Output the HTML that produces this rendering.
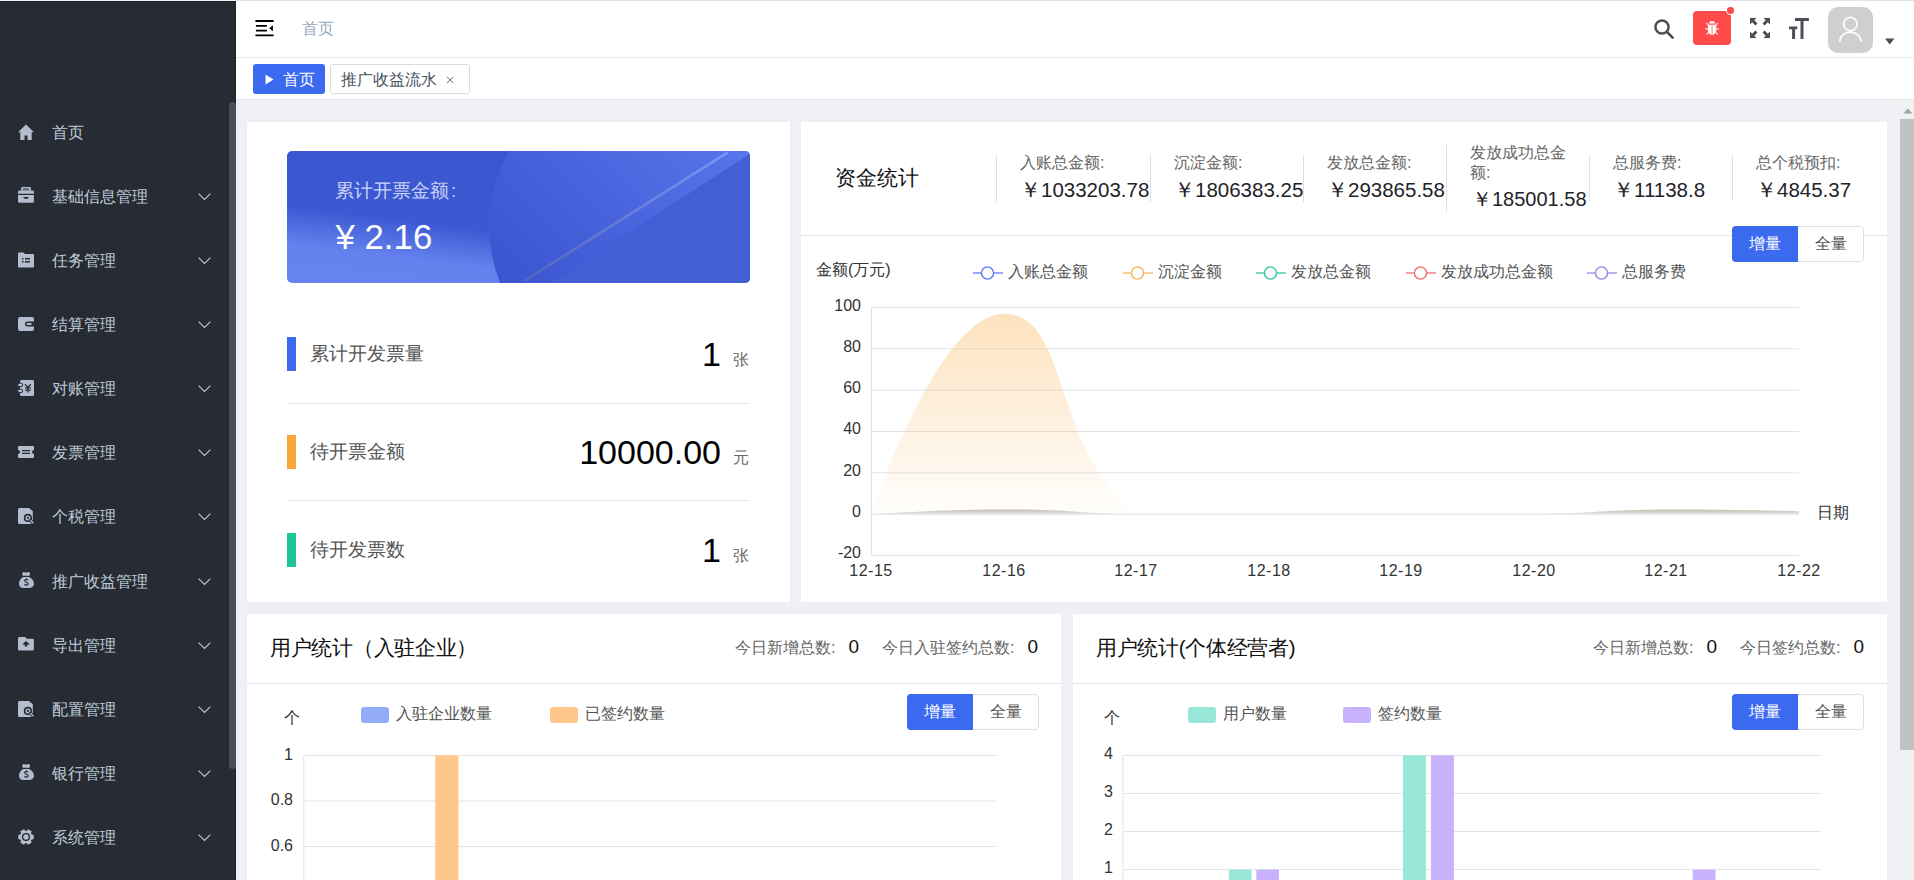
<!DOCTYPE html><html><head><meta charset="utf-8"><style>
*{margin:0;padding:0;box-sizing:border-box}
html,body{width:1914px;height:880px;overflow:hidden;background:#eef0f5;font-family:"Liberation Sans",sans-serif;}
.a{position:absolute;white-space:nowrap}
.mi{position:absolute;left:0;width:228px;height:40px;color:#bfcbd9;font-size:16px;line-height:40px}
.mi .t{position:absolute;left:52px;top:1px}
.mi svg.ic{position:absolute;left:18px;top:12px;width:16px;height:16px;overflow:visible}
.mi svg.ch{position:absolute;left:198px;top:17px;width:13px;height:8px}
.card{position:absolute;background:#fff}
.cn{font-family:"Liberation Sans",sans-serif}
</style></head><body>
<div class="a" style="left:0;top:0;width:236px;height:1px;background:#f4f4f5"></div>
<div class="a" style="left:0;top:1px;width:236px;height:879px;background:#272b33;border-top:1px solid #1d2028;border-right:1px solid #1f232a"></div>
<div class="a" style="left:229px;top:102px;width:7px;height:667px;background:#4a4e56;border-radius:4px"></div>
<div class="mi" style="top:112px"><svg class="ic" viewBox="0 0 16 16"><path d="M8 0.5L0 8.2h2.3V16h4.2v-4.6h3V16h4.2V8.2H16z" fill="#b4bdce"/></svg><span class="t">首页</span></div>
<div class="mi" style="top:176px"><svg class="ic" viewBox="0 0 16 16"><path d="M4.1 -1h7.8a1 1 0 0 1 1 1v2.5H3.1V0a1 1 0 0 1 1-1z" fill="#b4bdce"/><rect x="5" y="0.5" width="6" height="1.1" fill="#272b33"/><path d="M1.5 2.5h12.9a1.5 1.5 0 0 1 1.5 1.5v1.8H0V4a1.5 1.5 0 0 1 1.5-1.5z" fill="#b4bdce"/><path d="M0 6.9h15.9v6.4a1.5 1.5 0 0 1-1.5 1.5H1.5A1.5 1.5 0 0 1 0 13.3z" fill="#b4bdce"/><path d="M5.3 9.1h5.4c0 1.1-1.2 1.9-2.7 1.9s-2.7-0.8-2.7-1.9z" fill="#272b33"/></svg><span class="t">基础信息管理</span><svg class="ch" viewBox="0 0 13 8"><path d="M0.6 0.6L6.5 6.5L12.4 0.6" stroke="#bfcbd9" stroke-width="1.1" fill="none"/></svg></div>
<div class="mi" style="top:240px"><svg class="ic" viewBox="0 0 16 16"><path d="M0 1.5A1 1 0 0 1 1 0.5h4.5l1.5 1.5H15a1 1 0 0 1 1 1V14.5a1 1 0 0 1-1 1H1a1 1 0 0 1-1-1zM4 6v1.5h1.5V6zM7 6v1.5h5V6zM4 9v1.5h1.5V9zM7 9v1.5h5V9z" fill="#b4bdce" fill-rule="evenodd"/></svg><span class="t">任务管理</span><svg class="ch" viewBox="0 0 13 8"><path d="M0.6 0.6L6.5 6.5L12.4 0.6" stroke="#bfcbd9" stroke-width="1.1" fill="none"/></svg></div>
<div class="mi" style="top:304px"><svg class="ic" viewBox="0 0 16 16"><path d="M2 1h12a2 2 0 0 1 2 2v10a2 2 0 0 1-2 2H2a2 2 0 0 1-2-2V3a2 2 0 0 1 2-2zM9.5 5.5a2.5 2.5 0 0 0 0 5H16v-5zM9.5 7h4v2h-4a1 1 0 0 1 0-2z" fill="#b4bdce" fill-rule="evenodd"/></svg><span class="t">结算管理</span><svg class="ch" viewBox="0 0 13 8"><path d="M0.6 0.6L6.5 6.5L12.4 0.6" stroke="#bfcbd9" stroke-width="1.1" fill="none"/></svg></div>
<div class="mi" style="top:368px"><svg class="ic" viewBox="0 0 16 16"><path d="M3.5 0h11a1.5 1.5 0 0 1 1.5 1.5v13a1.5 1.5 0 0 1-1.5 1.5h-11a1.5 1.5 0 0 1-1.5-1.5v-13A1.5 1.5 0 0 1 3.5 0z" fill="#b4bdce"/><rect x="-0.3" y="3.2" width="5" height="3.4" rx="1.7" fill="#b4bdce" stroke="#272b33" stroke-width="1"/><rect x="-0.3" y="9.2" width="5" height="3.4" rx="1.7" fill="#b4bdce" stroke="#272b33" stroke-width="1"/><path d="M7 4.2L9.9 7.4L12.8 4.2M7 7.9h5.8M7 10.2h5.8M9.9 7.4v5" stroke="#272b33" stroke-width="1.3" fill="none"/></svg><span class="t">对账管理</span><svg class="ch" viewBox="0 0 13 8"><path d="M0.6 0.6L6.5 6.5L12.4 0.6" stroke="#bfcbd9" stroke-width="1.1" fill="none"/></svg></div>
<div class="mi" style="top:432px"><svg class="ic" viewBox="0 0 16 16"><path d="M1 2h14a1 1 0 0 1 1 1v3a2 2 0 0 0 0 4v3a1 1 0 0 1-1 1H1a1 1 0 0 1-1-1v-3a2 2 0 0 0 0-4V3a1 1 0 0 1 1-1zM4 6v1.2h8V6zM4 8.8V10h8V8.8z" fill="#b4bdce" fill-rule="evenodd"/></svg><span class="t">发票管理</span><svg class="ch" viewBox="0 0 13 8"><path d="M0.6 0.6L6.5 6.5L12.4 0.6" stroke="#bfcbd9" stroke-width="1.1" fill="none"/></svg></div>
<div class="mi" style="top:496px"><svg class="ic" viewBox="0 0 16 16"><path d="M1.5 0h9.5l3.8 3.2v11.3a1.5 1.5 0 0 1-1.5 1.5H1.5A1.5 1.5 0 0 1 0 14.5v-13A1.5 1.5 0 0 1 1.5 0z" fill="#b4bdce"/><circle cx="9.9" cy="9.9" r="3.3" fill="none" stroke="#272b33" stroke-width="1.6"/><circle cx="9.9" cy="9.9" r="1.1" fill="#272b33"/><path d="M12.4 12.4L15 14.8" stroke="#272b33" stroke-width="3.2" stroke-linecap="round"/><path d="M12.6 12.6L15 14.8" stroke="#b4bdce" stroke-width="1.4" stroke-linecap="round"/></svg><span class="t">个税管理</span><svg class="ch" viewBox="0 0 13 8"><path d="M0.6 0.6L6.5 6.5L12.4 0.6" stroke="#bfcbd9" stroke-width="1.1" fill="none"/></svg></div>
<div class="mi" style="top:561px"><svg class="ic" viewBox="0 0 16 16"><path d="M4.6 0c0.1-0.8 1-1.2 1.8-0.8l1.7 0.6l1.7-0.6c0.8-0.4 1.8 0 1.9 0.8l0.3 1.6c0.1 0.7-0.4 1.1-1.1 1.1H5.4c-0.7 0-1.2-0.4-1.1-1.1z" fill="#b4bdce"/><path d="M5.2 3.9h5.8c3 1.3 4.9 3.6 4.9 6.6c0 3-2.4 4.6-5.4 4.6H5.7c-3 0-4.7-1.6-4.7-4.6c0-3 1.6-5.3 4.2-6.6z" fill="#b4bdce"/><path d="M10.1 7.3c-0.4-0.6-1-0.9-1.7-0.9c-1 0-1.7 0.6-1.7 1.3c0 1.8 3.5 1.1 3.5 3c0 0.8-0.8 1.4-1.8 1.4c-0.8 0-1.5-0.4-1.9-1M8.4 5.4v1M8.4 11.8v1.2" stroke="#272b33" stroke-width="1.1" fill="none"/></svg><span class="t">推广收益管理</span><svg class="ch" viewBox="0 0 13 8"><path d="M0.6 0.6L6.5 6.5L12.4 0.6" stroke="#bfcbd9" stroke-width="1.1" fill="none"/></svg></div>
<div class="mi" style="top:625px"><svg class="ic" viewBox="0 0 16 16"><path d="M0 1.5A1.5 1.5 0 0 1 1.5 0h5.6l1.8 1.8h5.8a1.2 1.2 0 0 1 1.2 1.2v9.2a1.2 1.2 0 0 1-1.2 1.2H1.2A1.2 1.2 0 0 1 0 12.2z" fill="#b4bdce"/><path d="M4 7.4L8 4L12 7.4z M6.8 7h2.4v2.5H6.8z" fill="#272b33"/></svg><span class="t">导出管理</span><svg class="ch" viewBox="0 0 13 8"><path d="M0.6 0.6L6.5 6.5L12.4 0.6" stroke="#bfcbd9" stroke-width="1.1" fill="none"/></svg></div>
<div class="mi" style="top:689px"><svg class="ic" viewBox="0 0 16 16"><path d="M1.5 0h9.5l3.8 3.2v11.3a1.5 1.5 0 0 1-1.5 1.5H1.5A1.5 1.5 0 0 1 0 14.5v-13A1.5 1.5 0 0 1 1.5 0z" fill="#b4bdce"/><circle cx="9.9" cy="9.9" r="3.3" fill="none" stroke="#272b33" stroke-width="1.6"/><circle cx="9.9" cy="9.9" r="1.1" fill="#272b33"/><path d="M12.4 12.4L15 14.8" stroke="#272b33" stroke-width="3.2" stroke-linecap="round"/><path d="M12.6 12.6L15 14.8" stroke="#b4bdce" stroke-width="1.4" stroke-linecap="round"/></svg><span class="t">配置管理</span><svg class="ch" viewBox="0 0 13 8"><path d="M0.6 0.6L6.5 6.5L12.4 0.6" stroke="#bfcbd9" stroke-width="1.1" fill="none"/></svg></div>
<div class="mi" style="top:753px"><svg class="ic" viewBox="0 0 16 16"><path d="M4.6 0c0.1-0.8 1-1.2 1.8-0.8l1.7 0.6l1.7-0.6c0.8-0.4 1.8 0 1.9 0.8l0.3 1.6c0.1 0.7-0.4 1.1-1.1 1.1H5.4c-0.7 0-1.2-0.4-1.1-1.1z" fill="#b4bdce"/><path d="M5.2 3.9h5.8c3 1.3 4.9 3.6 4.9 6.6c0 3-2.4 4.6-5.4 4.6H5.7c-3 0-4.7-1.6-4.7-4.6c0-3 1.6-5.3 4.2-6.6z" fill="#b4bdce"/><path d="M10.1 7.3c-0.4-0.6-1-0.9-1.7-0.9c-1 0-1.7 0.6-1.7 1.3c0 1.8 3.5 1.1 3.5 3c0 0.8-0.8 1.4-1.8 1.4c-0.8 0-1.5-0.4-1.9-1M8.4 5.4v1M8.4 11.8v1.2" stroke="#272b33" stroke-width="1.1" fill="none"/></svg><span class="t">银行管理</span><svg class="ch" viewBox="0 0 13 8"><path d="M0.6 0.6L6.5 6.5L12.4 0.6" stroke="#bfcbd9" stroke-width="1.1" fill="none"/></svg></div>
<div class="mi" style="top:817px"><svg class="ic" viewBox="0 0 16 16"><path d="M15.73 5.93 L15.73 10.07 L13.71 10.42 L12.95 11.73 L13.66 13.66 L10.07 15.73 L8.76 14.15 L7.24 14.15 L5.93 15.73 L2.34 13.66 L3.05 11.73 L2.29 10.42 L0.27 10.07 L0.27 5.93 L2.29 5.58 L3.05 4.27 L2.34 2.34 L5.93 0.27 L7.24 1.85 L8.76 1.85 L10.07 0.27 L13.66 2.34 L12.95 4.27 L13.71 5.58z" fill="#b4bdce"/><circle cx="8" cy="8" r="3.4" fill="none" stroke="#272b33" stroke-width="1.4"/></svg><span class="t">系统管理</span><svg class="ch" viewBox="0 0 13 8"><path d="M0.6 0.6L6.5 6.5L12.4 0.6" stroke="#bfcbd9" stroke-width="1.1" fill="none"/></svg></div>
<div class="a" style="left:236px;top:0;width:1678px;height:99px;background:#fff"></div>
<div class="a" style="left:236px;top:0;width:1678px;height:1px;background:#e3e3e5"></div>
<div class="a" style="left:236px;top:57px;width:1678px;height:1px;background:#e6e8eb"></div>
<svg class="a" style="left:255px;top:20px" width="20" height="17" viewBox="0 0 20 17"><path d="M0.4 1H18.6M0.9 5.9H11.9M0.9 10.6H11.9M0.4 15.4H18.6" stroke="#000" stroke-width="1.8"/><path d="M14.2 8.3L17.9 5.2V11.3z" fill="#000"/></svg>
<div class="a" style="left:302px;top:18px;font-size:16px;line-height:22px;color:#97a8be">首页</div>
<svg class="a" style="left:1653px;top:18px" width="23" height="23" viewBox="0 0 23 23"><circle cx="9" cy="9" r="6.6" stroke="#4a4f57" stroke-width="2.5" fill="none"/><path d="M14 14L19.6 19.6" stroke="#4a4f57" stroke-width="2.7" stroke-linecap="round"/></svg>
<div class="a" style="left:1693px;top:11px;width:38px;height:34px;background:#ff4a4a;border-radius:4px"></div>
<svg class="a" style="left:1704px;top:20px" width="16" height="16" viewBox="0 0 16 16"><path d="M5.2 3.4a2.9 2.3 0 0 1 5.8 0z" fill="#fff"/><path d="M3.9 4.7h8.4v5.8a4.2 4.4 0 0 1-8.4 0z" fill="#fff"/><path d="M8.1 5.6v9" stroke="#ff9d9d" stroke-width="1.3"/><path d="M1.2 9H3.9M12.3 9H15M4.3 5.1L2.6 3.2M11.9 5.1L13.6 3.2M4.3 12.6L2.6 14.5M11.9 12.6L13.6 14.5" stroke="#fff" stroke-width="1.1"/></svg>
<div class="a" style="left:1727.3px;top:7.3px;width:6.6px;height:6.6px;background:#ff4a4a;border-radius:50%;box-shadow:0 0 0 1px #fff"></div>
<svg class="a" style="left:1749px;top:17px" width="22" height="22" viewBox="0 0 22 22"><g fill="#4a4f57"><path d="M1 1h6.5L5.3 3.2l3.2 3.2-2.1 2.1-3.2-3.2L1 7.5z"/><path d="M21 1v6.5l-2.2-2.2-3.2 3.2-2.1-2.1 3.2-3.2L14.5 1z"/><path d="M1 21v-6.5l2.2 2.2 3.2-3.2 2.1 2.1-3.2 3.2 2.2 2.2z"/><path d="M21 21h-6.5l2.2-2.2-3.2-3.2 2.1-2.1 3.2 3.2 2.2-2.2z"/></g></svg>
<svg class="a" style="left:1788px;top:17px" width="22" height="22" viewBox="0 0 22 22"><g fill="#4a4f57"><path d="M7 1h13.9v3h-5.4V21.9h-3V4H7z"/><path d="M1 9.6h8.3v2.6H7.1V21.9H4.1V12.2H1z"/></g></svg>
<div class="a" style="left:1828px;top:7px;width:45px;height:46px;background:#cfcfcf;border-radius:10px"></div>
<svg class="a" style="left:1835px;top:15px" width="30" height="30" viewBox="0 0 30 30"><circle cx="15.4" cy="9" r="6.7" stroke="#fff" stroke-width="1.7" fill="none"/><path d="M4.9 26a10.5 8.8 0 0 1 21 0" stroke="#fff" stroke-width="1.7" fill="none" stroke-linecap="round"/></svg>
<svg class="a" style="left:1885px;top:38px" width="10" height="7" viewBox="0 0 10 7"><path d="M0 0.5h9.5L4.75 6.5z" fill="#4a4f57"/></svg>
<div class="a" style="left:236px;top:98.6px;width:1678px;height:1px;background:#e6e6e6"></div>
<div class="a" style="left:253px;top:64px;width:72px;height:30px;background:#3b69f0;border-radius:3px"></div>
<svg class="a" style="left:265px;top:73.5px" width="9" height="11" viewBox="0 0 9 11"><path d="M0.5 0.5L8.5 5.5L0.5 10.5z" fill="#fff"/></svg>
<div class="a" style="left:283px;top:68.5px;font-size:16px;line-height:22px;color:#fff">首页</div>
<div class="a" style="left:330px;top:64px;width:140px;height:30px;border:1px solid #d8dce5;border-radius:3px;background:#fff"></div>
<div class="a" style="left:340.5px;top:69px;font-size:16px;line-height:22px;color:#495060">推广收益流水</div>
<svg class="a" style="left:446px;top:76px" width="8" height="8" viewBox="0 0 8 8"><path d="M1 0.8L7.3 7.1M7.3 0.8L1 7.1" stroke="#6a6a6a" stroke-width="1"/></svg>
<div class="a" style="left:1898px;top:99.6px;width:16px;height:781px;background:#f1f1f1"></div>
<svg class="a" style="left:1902.5px;top:107.5px" width="10" height="6" viewBox="0 0 10 6"><path d="M0.3 5.4L4.8 0.6L9.3 5.4z" fill="#a3a3a3"/></svg>
<div class="a" style="left:1900px;top:119px;width:14px;height:631px;background:#c1c1c1"></div>
<div class="card" style="left:247px;top:122px;width:543px;height:480px"></div>
<div class="a" style="left:287px;top:151px;width:463px;height:132px;border-radius:5px;overflow:hidden;background:linear-gradient(187deg,#3955cf 0%,#3d59d2 59%,#6481ee 79%,#6884f0 100%)">
<svg style="position:absolute;left:0;top:0" width="463" height="132" viewBox="0 0 463 132">
<defs><linearGradient id="cg" x1="0" y1="1" x2="1" y2="0"><stop offset="0.1" stop-color="#3651cc"/><stop offset="1" stop-color="#617ff3"/></linearGradient></defs>
<circle cx="353" cy="75" r="151" fill="url(#cg)"/>
<path d="M263 132L463 3V132z" fill="#445fd6"/>
<defs><linearGradient id="lg" x1="0" y1="1" x2="1" y2="0"><stop offset="0" stop-color="#5764bf"/><stop offset="1" stop-color="#7d94f7"/></linearGradient></defs><path d="M238 129.5L440 1.8" stroke="url(#lg)" stroke-width="2.6" stroke-linecap="round"/>
</svg>
<div class="a" style="left:48px;top:28px;font-size:18.5px;line-height:24px;color:#c9d2f7">累计开票金额<span style="margin-left:2px">:</span></div>
<div class="a" style="left:47px;top:65.5px;font-size:34.8px;line-height:40px;color:#fff;left:48.5px">¥ 2.16</div>
</div>
<div class="a" style="left:287px;top:337px;width:9px;height:34px;background:#3d6af0"></div>
<div class="a" style="left:310px;top:342px;font-size:18.5px;line-height:24px;color:#555">累计开发票量</div>
<div class="a" style="left:500px;width:221px;text-align:right;top:336px;font-size:34px;line-height:36px;color:#000">1</div>
<div class="a" style="left:733px;top:350px;font-size:16px;line-height:20px;color:#666">张</div>
<div class="a" style="left:287px;top:435px;width:9px;height:34px;background:#f8a73c"></div>
<div class="a" style="left:310px;top:440px;font-size:18.5px;line-height:24px;color:#555">待开票金额</div>
<div class="a" style="left:500px;width:221px;text-align:right;top:434px;font-size:34px;line-height:36px;color:#000">10000.00</div>
<div class="a" style="left:733px;top:448px;font-size:16px;line-height:20px;color:#666">元</div>
<div class="a" style="left:287px;top:533px;width:9px;height:34px;background:#1dc596"></div>
<div class="a" style="left:310px;top:538px;font-size:18.5px;line-height:24px;color:#555">待开发票数</div>
<div class="a" style="left:500px;width:221px;text-align:right;top:532px;font-size:34px;line-height:36px;color:#000">1</div>
<div class="a" style="left:733px;top:546px;font-size:16px;line-height:20px;color:#666">张</div>
<div class="a" style="left:287px;top:403px;width:463px;height:1px;background:#e4e6ec"></div>
<div class="a" style="left:287px;top:500px;width:463px;height:1px;background:#e4e6ec"></div>
<div class="card" style="left:801px;top:122px;width:1086px;height:480px"></div>
<div class="a" style="left:835px;top:165px;font-size:20.6px;line-height:26px;color:#111">资金统计</div>
<div class="a" style="left:801px;top:235px;width:1086px;height:1px;background:#e4e7ed"></div>
<div class="a" style="left:996px;top:155px;width:1px;height:47px;background:#dcdfe6"></div>
<div class="a" style="left:1150px;top:155px;width:1px;height:47px;background:#dcdfe6"></div>
<div class="a" style="left:1303px;top:155px;width:1px;height:47px;background:#dcdfe6"></div>
<div class="a" style="left:1446px;top:145px;width:1px;height:67px;background:#dcdfe6"></div>
<div class="a" style="left:1589px;top:155px;width:1px;height:46px;background:#dcdfe6"></div>
<div class="a" style="left:1732px;top:155px;width:1px;height:46px;background:#dcdfe6"></div>
<div class="a" style="left:1020px;top:152px;font-size:16px;line-height:22px;color:#666">入账总金额:</div>
<div class="a" style="left:1020px;top:177.5px;font-size:20.5px;line-height:24px;color:#1f2329">￥1033203.78</div>
<div class="a" style="left:1174px;top:152px;font-size:16px;line-height:22px;color:#666">沉淀金额:</div>
<div class="a" style="left:1174px;top:177.5px;font-size:20.5px;line-height:24px;color:#1f2329">￥1806383.25</div>
<div class="a" style="left:1327px;top:152px;font-size:16px;line-height:22px;color:#666">发放总金额:</div>
<div class="a" style="left:1327px;top:177.5px;font-size:20.5px;line-height:24px;color:#1f2329">￥293865.58</div>
<div class="a" style="left:1756px;top:152px;font-size:16px;line-height:22px;color:#666">总个税预扣:</div>
<div class="a" style="left:1756px;top:177.5px;font-size:20.5px;line-height:24px;color:#1f2329">￥4845.37</div>
<div class="a" style="left:1613px;top:152px;font-size:16px;line-height:22px;color:#666">总服务费:</div>
<div class="a" style="left:1613px;top:177.5px;font-size:20.5px;line-height:24px;color:#1f2329">￥11138.8</div>
<div class="a" style="left:1470px;top:143px;font-size:16px;line-height:19.5px;color:#666;white-space:normal;width:100px">发放成功总金额:</div>
<div class="a" style="left:1472px;top:187px;font-size:20px;line-height:24px;color:#1f2329">￥185001.58</div>
<div class="a" style="left:1732px;top:226px;width:132px;height:36px;border:1px solid #dcdfe6;border-radius:4px;background:#fff"></div>
<div class="a" style="left:1732px;top:226px;width:66px;height:36px;background:#3b69f0;border-radius:4px 0 0 4px"></div>
<div class="a" style="left:1732px;top:226px;width:66px;text-align:center;font-size:16px;line-height:36px;color:#fff">增量</div>
<div class="a" style="left:1798px;top:226px;width:66px;text-align:center;font-size:16px;line-height:36px;color:#555">全量</div>
<div class="a" style="left:816px;top:260px;font-size:16px;line-height:20px;color:#333">金额(万元)</div>
<svg class="a" style="left:973px;top:266px" width="30" height="14" viewBox="0 0 30 14"><path d="M0 7h30" stroke="#5b7ef5" stroke-width="1.3"/><circle cx="14.5" cy="7" r="6.1" fill="#fff" stroke="#5b7ef5" stroke-width="1.4"/></svg>
<div class="a" style="left:1008px;top:262px;font-size:16px;line-height:20px;color:#555">入账总金额</div>
<svg class="a" style="left:1123px;top:266px" width="30" height="14" viewBox="0 0 30 14"><path d="M0 7h30" stroke="#f9b35e" stroke-width="1.3"/><circle cx="14.5" cy="7" r="6.1" fill="#fff" stroke="#f9b35e" stroke-width="1.4"/></svg>
<div class="a" style="left:1158px;top:262px;font-size:16px;line-height:20px;color:#555">沉淀金额</div>
<svg class="a" style="left:1256px;top:266px" width="30" height="14" viewBox="0 0 30 14"><path d="M0 7h30" stroke="#2fc8a0" stroke-width="1.3"/><circle cx="14.5" cy="7" r="6.1" fill="#fff" stroke="#2fc8a0" stroke-width="1.4"/></svg>
<div class="a" style="left:1291px;top:262px;font-size:16px;line-height:20px;color:#555">发放总金额</div>
<svg class="a" style="left:1406px;top:266px" width="30" height="14" viewBox="0 0 30 14"><path d="M0 7h30" stroke="#f56c6c" stroke-width="1.3"/><circle cx="14.5" cy="7" r="6.1" fill="#fff" stroke="#f56c6c" stroke-width="1.4"/></svg>
<div class="a" style="left:1441px;top:262px;font-size:16px;line-height:20px;color:#555">发放成功总金额</div>
<svg class="a" style="left:1587px;top:266px" width="30" height="14" viewBox="0 0 30 14"><path d="M0 7h30" stroke="#9b86e6" stroke-width="1.3"/><circle cx="14.5" cy="7" r="6.1" fill="#fff" stroke="#9b86e6" stroke-width="1.4"/></svg>
<div class="a" style="left:1622px;top:262px;font-size:16px;line-height:20px;color:#555">总服务费</div>
<svg class="a" style="left:0;top:0" width="1914" height="880" viewBox="0 0 1914 880"><defs><linearGradient id="og" x1="0" y1="0" x2="0" y2="1"><stop offset="0" stop-color="#fbc781" stop-opacity="0.52"/><stop offset="1" stop-color="#fbc781" stop-opacity="0.02"/></linearGradient><linearGradient id="hg" x1="0" y1="0" x2="0" y2="1"><stop offset="0" stop-color="#c0bbae"/><stop offset="1" stop-color="#ebe9e4"/></linearGradient></defs><path d="M871.5 307.5H1799.0" stroke="#e0e3ec" stroke-width="1"/><path d="M871.5 348.8H1799.0" stroke="#e0e3ec" stroke-width="1"/><path d="M871.5 390.2H1799.0" stroke="#e0e3ec" stroke-width="1"/><path d="M871.5 431.5H1799.0" stroke="#e0e3ec" stroke-width="1"/><path d="M871.5 472.8H1799.0" stroke="#e0e3ec" stroke-width="1"/><path d="M871.5 514.2H1799.0" stroke="#e0e3ec" stroke-width="1"/><path d="M871.5 555.5H1799.0" stroke="#e0e3ec" stroke-width="1"/><path d="M871.5 307.5V555.5" stroke="#e0e3ec" stroke-width="1"/><path d="M871.50,514.17 C871.50,514.17 937.75,313.70 1004.00,313.70 C1070.25,313.70 1051.09,449.56 1136.50,514.17 C1183.59,514.17 1202.75,514.17 1269.00,514.17 C1335.25,514.17 1335.25,514.17 1401.50,514.17 C1467.75,514.17 1467.75,514.17 1534.00,514.17 C1600.25,514.17 1600.25,514.17 1666.50,514.17 C1732.75,514.17 1799.00,514.17 1799.00,514.17 L1799,514.17 Z" fill="url(#og)"/><path d="M871.50,514.17 C871.50,514.17 937.75,509.42 1004.00,509.42 C1070.25,509.42 1070.23,512.98 1136.50,514.17 C1202.73,514.17 1202.75,514.17 1269.00,514.17 C1335.25,514.17 1335.25,514.17 1401.50,514.17 C1467.75,514.17 1467.75,514.17 1534.00,514.17 C1600.25,514.17 1600.25,514.17 1666.50,514.17 C1732.75,514.17 1799.00,514.17 1799.00,514.17 Z" fill="url(#hg)"/><path d="M871.50,514.17 C871.50,514.17 937.75,514.17 1004.00,514.17 C1070.25,514.17 1070.25,514.17 1136.50,514.17 C1202.75,514.17 1202.75,514.17 1269.00,514.17 C1335.25,514.17 1335.25,514.17 1401.50,514.17 C1467.75,514.17 1467.77,514.17 1534.00,514.17 C1600.27,513.03 1600.23,510.35 1666.50,509.62 C1732.73,509.62 1799.00,511.28 1799.00,511.28 L1799,514.17 Z" fill="url(#hg)"/></svg>
<div class="a" style="left:800px;width:61px;text-align:right;top:295.5px;font-size:16px;line-height:20px;color:#333">100</div>
<div class="a" style="left:800px;width:61px;text-align:right;top:336.83299999999997px;font-size:16px;line-height:20px;color:#333">80</div>
<div class="a" style="left:800px;width:61px;text-align:right;top:378.166px;font-size:16px;line-height:20px;color:#333">60</div>
<div class="a" style="left:800px;width:61px;text-align:right;top:419.499px;font-size:16px;line-height:20px;color:#333">40</div>
<div class="a" style="left:800px;width:61px;text-align:right;top:460.832px;font-size:16px;line-height:20px;color:#333">20</div>
<div class="a" style="left:800px;width:61px;text-align:right;top:502.16499999999996px;font-size:16px;line-height:20px;color:#333">0</div>
<div class="a" style="left:800px;width:61px;text-align:right;top:543.498px;font-size:16px;line-height:20px;color:#333">-20</div>
<div class="a" style="left:831px;width:80px;text-align:center;top:561px;letter-spacing:0.5px;font-size:16px;line-height:20px;color:#333">12-15</div>
<div class="a" style="left:964px;width:80px;text-align:center;top:561px;letter-spacing:0.5px;font-size:16px;line-height:20px;color:#333">12-16</div>
<div class="a" style="left:1096px;width:80px;text-align:center;top:561px;letter-spacing:0.5px;font-size:16px;line-height:20px;color:#333">12-17</div>
<div class="a" style="left:1229px;width:80px;text-align:center;top:561px;letter-spacing:0.5px;font-size:16px;line-height:20px;color:#333">12-18</div>
<div class="a" style="left:1361px;width:80px;text-align:center;top:561px;letter-spacing:0.5px;font-size:16px;line-height:20px;color:#333">12-19</div>
<div class="a" style="left:1494px;width:80px;text-align:center;top:561px;letter-spacing:0.5px;font-size:16px;line-height:20px;color:#333">12-20</div>
<div class="a" style="left:1626px;width:80px;text-align:center;top:561px;letter-spacing:0.5px;font-size:16px;line-height:20px;color:#333">12-21</div>
<div class="a" style="left:1759px;width:80px;text-align:center;top:561px;letter-spacing:0.5px;font-size:16px;line-height:20px;color:#333">12-22</div>
<div class="a" style="left:1817px;top:503px;font-size:16px;line-height:20px;color:#333">日期</div>
<div class="card" style="left:247px;top:614px;width:814px;height:280px"></div>
<div class="a" style="left:270px;top:635px;font-size:20.6px;line-height:26px;color:#111;letter-spacing:-0.3px">用户统计（入驻企业）</div>
<div class="a" style="left:247px;top:683px;width:814px;height:1px;background:#e4e7ed"></div>
<div class="a" style="left:247px;width:791px;text-align:right;top:635px;font-size:16px;line-height:24px;color:#666">今日新增总数:<span style="font-size:19px;color:#111;margin-left:13px">0</span><span style="display:inline-block;width:23px"></span>今日入驻签约总数:<span style="font-size:19px;color:#111;margin-left:13px">0</span></div>
<div class="a" style="left:284px;top:708px;font-size:16px;line-height:20px;color:#333">个</div>
<div class="a" style="left:361px;top:707.2px;width:28px;height:15.6px;background:#93acfa;border-radius:3px"></div>
<div class="a" style="left:396px;top:704px;font-size:16px;line-height:20px;color:#555">入驻企业数量</div>
<div class="a" style="left:550px;top:707.2px;width:28px;height:15.6px;background:#fec78c;border-radius:3px"></div>
<div class="a" style="left:585px;top:704px;font-size:16px;line-height:20px;color:#555">已签约数量</div>
<div class="a" style="left:907px;top:694px;width:132px;height:36px;border:1px solid #dcdfe6;border-radius:4px;background:#fff"></div>
<div class="a" style="left:907px;top:694px;width:66px;height:36px;background:#3b69f0;border-radius:4px 0 0 4px"></div>
<div class="a" style="left:907px;top:694px;width:66px;text-align:center;font-size:16px;line-height:36px;color:#fff">增量</div>
<div class="a" style="left:973px;top:694px;width:66px;text-align:center;font-size:16px;line-height:36px;color:#555">全量</div>
<svg class="a" style="left:0;top:0" width="1914" height="880" viewBox="0 0 1914 880"><path d="M303.8 755.5H996.7" stroke="#e0e3ec" stroke-width="1"/><path d="M303.8 801.0H996.7" stroke="#e0e3ec" stroke-width="1"/><path d="M303.8 846.5H996.7" stroke="#e0e3ec" stroke-width="1"/><path d="M303.8 755.5V880" stroke="#e0e3ec" stroke-width="1"/><rect x="435.2" y="755.3" width="23.2" height="124.7" fill="#fec78c"/></svg>
<div class="a" style="left:247px;width:46px;text-align:right;top:744.5px;font-size:16px;line-height:20px;color:#333">1</div>
<div class="a" style="left:247px;width:46px;text-align:right;top:790px;font-size:16px;line-height:20px;color:#333">0.8</div>
<div class="a" style="left:247px;width:46px;text-align:right;top:835.5px;font-size:16px;line-height:20px;color:#333">0.6</div>
<div class="card" style="left:1073px;top:614px;width:814px;height:280px"></div>
<div class="a" style="left:1096px;top:635px;font-size:20.6px;line-height:26px;color:#111;letter-spacing:-0.3px">用户统计(个体经营者)</div>
<div class="a" style="left:1073px;top:683px;width:814px;height:1px;background:#e4e7ed"></div>
<div class="a" style="left:1073px;width:791px;text-align:right;top:635px;font-size:16px;line-height:24px;color:#666">今日新增总数:<span style="font-size:19px;color:#111;margin-left:13px">0</span><span style="display:inline-block;width:23px"></span>今日签约总数:<span style="font-size:19px;color:#111;margin-left:13px">0</span></div>
<div class="a" style="left:1104px;top:708px;font-size:16px;line-height:20px;color:#333">个</div>
<div class="a" style="left:1188px;top:707.2px;width:28px;height:15.6px;background:#98e7d8;border-radius:3px"></div>
<div class="a" style="left:1223px;top:704px;font-size:16px;line-height:20px;color:#555">用户数量</div>
<div class="a" style="left:1343px;top:707.2px;width:28px;height:15.6px;background:#c8b2fb;border-radius:3px"></div>
<div class="a" style="left:1378px;top:704px;font-size:16px;line-height:20px;color:#555">签约数量</div>
<div class="a" style="left:1732px;top:694px;width:132px;height:36px;border:1px solid #dcdfe6;border-radius:4px;background:#fff"></div>
<div class="a" style="left:1732px;top:694px;width:66px;height:36px;background:#3b69f0;border-radius:4px 0 0 4px"></div>
<div class="a" style="left:1732px;top:694px;width:66px;text-align:center;font-size:16px;line-height:36px;color:#fff">增量</div>
<div class="a" style="left:1798px;top:694px;width:66px;text-align:center;font-size:16px;line-height:36px;color:#555">全量</div>
<svg class="a" style="left:0;top:0" width="1914" height="880" viewBox="0 0 1914 880"><path d="M1123.0 755.5H1821.3" stroke="#e0e3ec" stroke-width="1"/><path d="M1123.0 793.5H1821.3" stroke="#e0e3ec" stroke-width="1"/><path d="M1123.0 831.5H1821.3" stroke="#e0e3ec" stroke-width="1"/><path d="M1123.0 869.5H1821.3" stroke="#e0e3ec" stroke-width="1"/><path d="M1123.0 755.5V880" stroke="#e0e3ec" stroke-width="1"/><rect x="1228.9" y="869.6" width="22.6" height="10.4" fill="#98e7d8"/><rect x="1256.3" y="869.6" width="22.6" height="10.4" fill="#c8b2fb"/><rect x="1403.0" y="755.3" width="22.9" height="124.7" fill="#98e7d8"/><rect x="1430.9" y="755.3" width="23.0" height="124.7" fill="#c8b2fb"/><rect x="1692.7" y="869.6" width="22.8" height="10.4" fill="#c8b2fb"/></svg>
<div class="a" style="left:1073px;width:40px;text-align:right;top:743.5px;font-size:16px;line-height:20px;color:#333">4</div>
<div class="a" style="left:1073px;width:40px;text-align:right;top:781.5px;font-size:16px;line-height:20px;color:#333">3</div>
<div class="a" style="left:1073px;width:40px;text-align:right;top:819.5px;font-size:16px;line-height:20px;color:#333">2</div>
<div class="a" style="left:1073px;width:40px;text-align:right;top:857.5px;font-size:16px;line-height:20px;color:#333">1</div>
</body></html>
